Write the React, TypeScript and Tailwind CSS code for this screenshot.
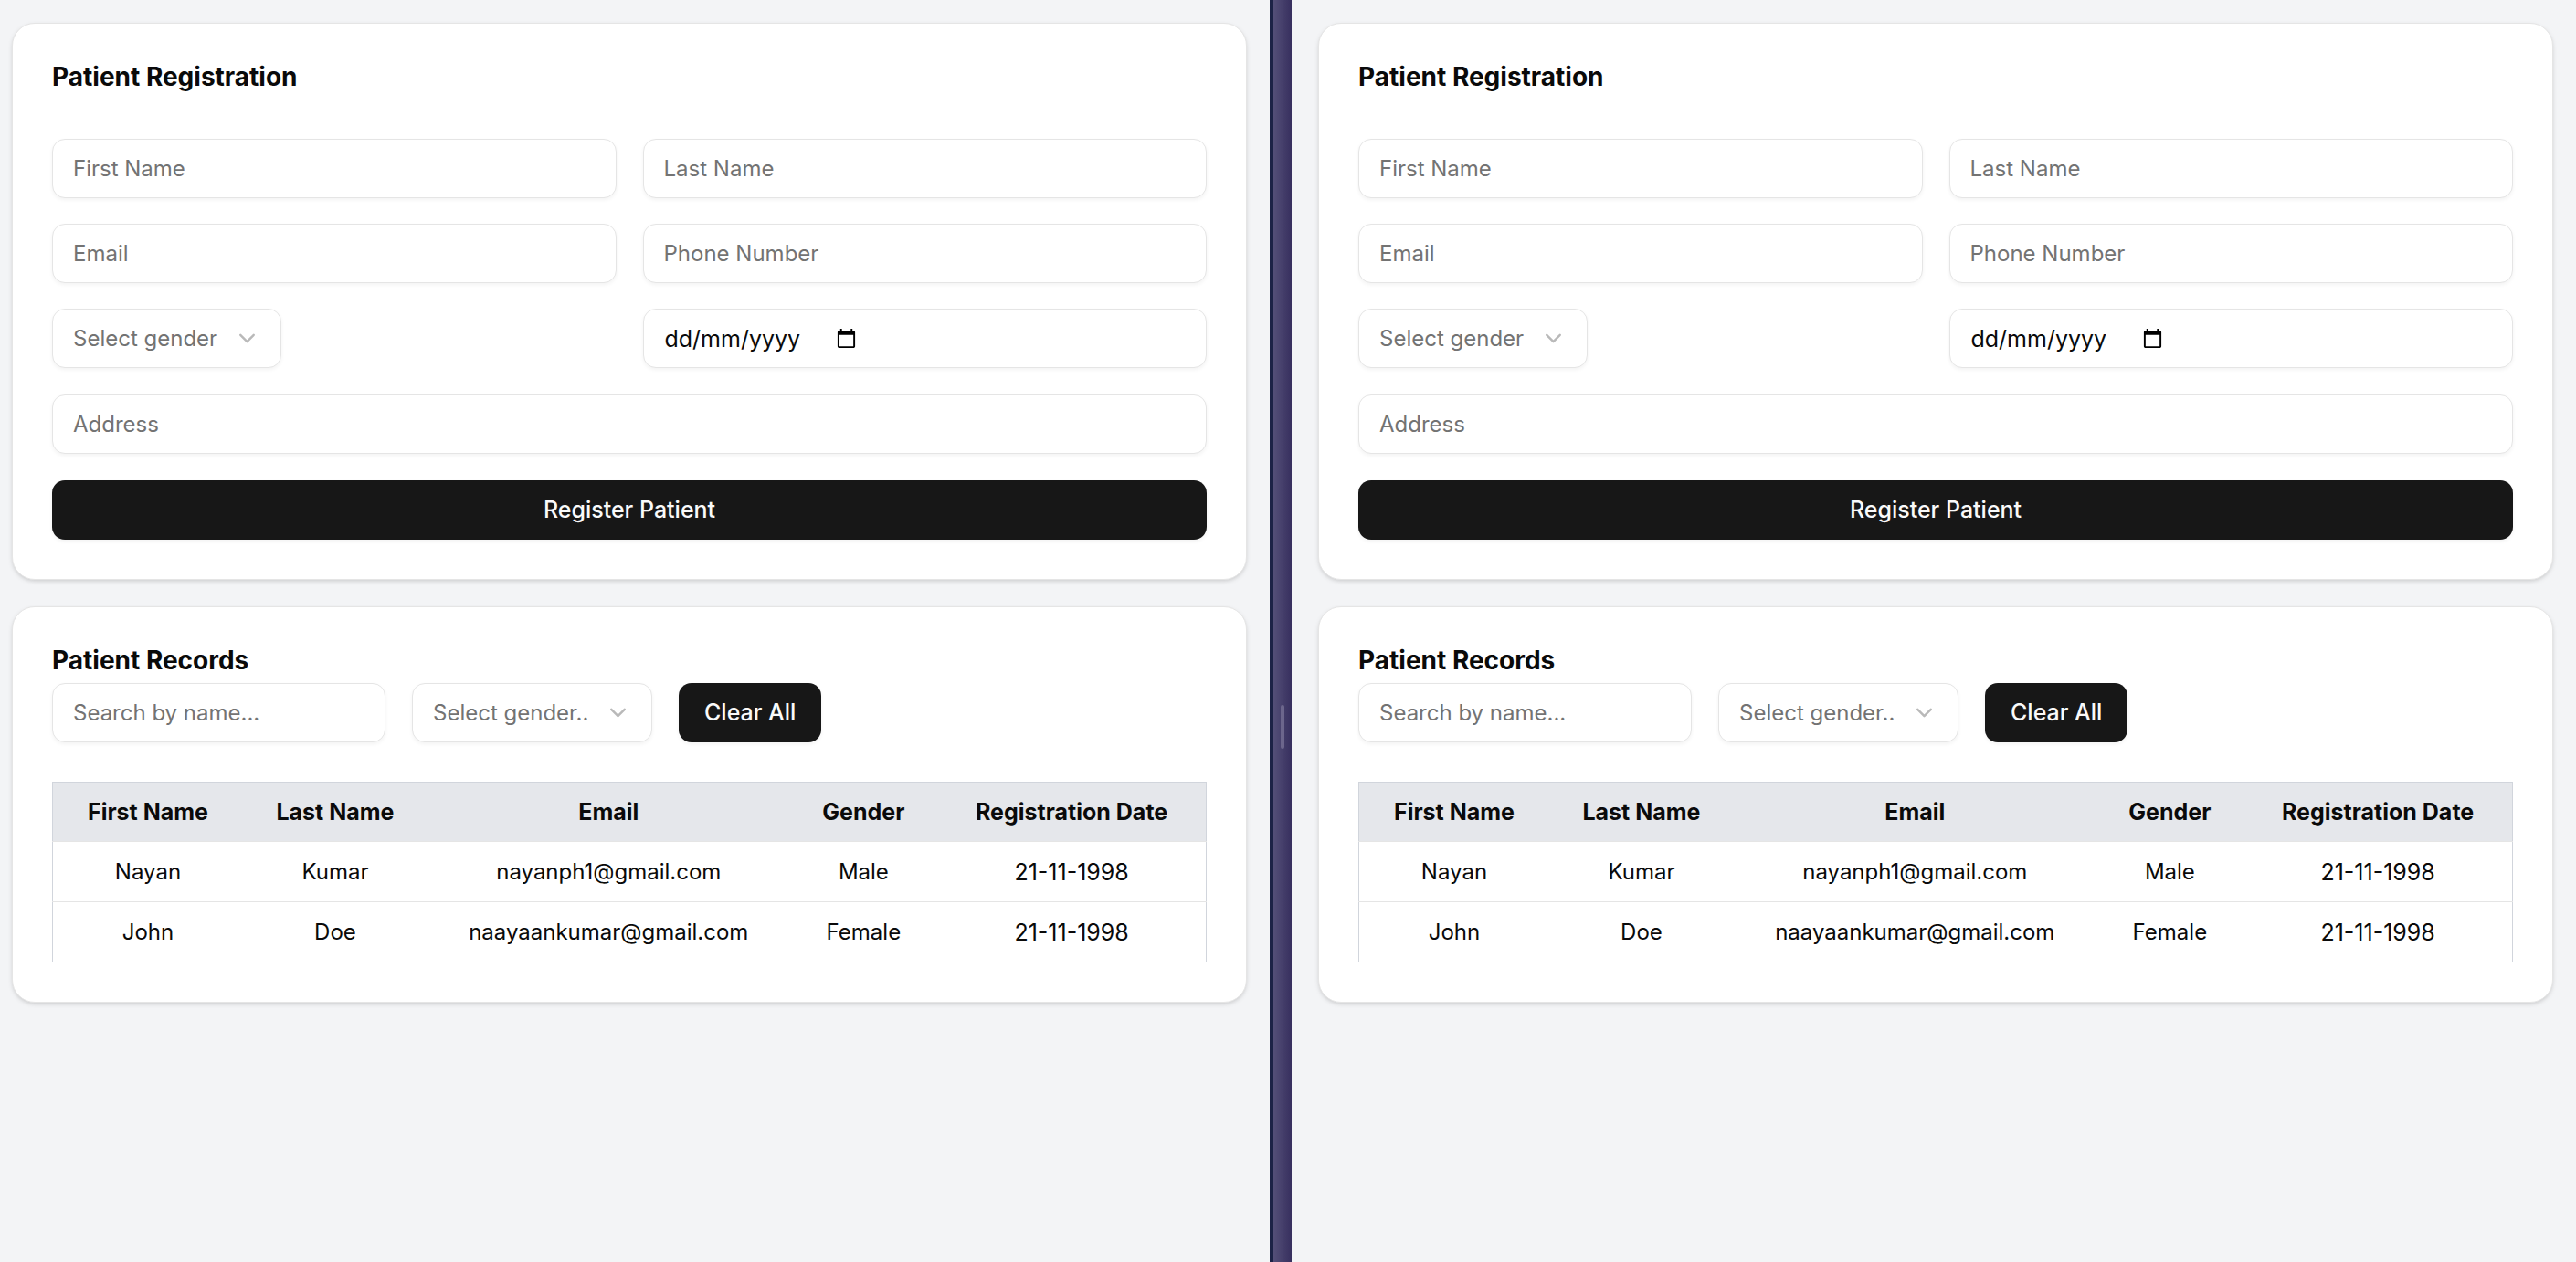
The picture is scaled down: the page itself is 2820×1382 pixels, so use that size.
import React from "react";

const FIELD =
  "h-[65px] min-w-0 rounded-[14px] border border-[#e5e5e5] bg-white px-[22px] text-[24px] text-[#0a0a0a] shadow-[0_2px_4px_rgba(0,0,0,0.05)] outline-none placeholder:text-[#737373] placeholder:opacity-100";

const BUTTON =
  "h-[65px] rounded-[14px] bg-[#171717] px-7 text-[25px] font-medium text-[#fafafa] shadow-[0_2px_4px_rgba(0,0,0,0.05)]";

const CARD =
  "flex flex-col rounded-[25px] border border-[#e5e5e5] bg-white p-[43px] shadow-[0_2px_5px_rgba(0,0,0,0.1),0_2px_4px_-2px_rgba(0,0,0,0.1)]";

const TITLE = "text-[28px] font-bold leading-[31px]";

const patients = [
  ["Nayan", "Kumar", "nayanph1@gmail.com", "Male", "21-11-1998"],
  ["John", "Doe", "naayaankumar@gmail.com", "Female", "21-11-1998"],
];

const columns = [
  { label: "First Name", width: "w-[16.5%]" },
  { label: "Last Name", width: "w-[16%]" },
  { label: "Email", width: "w-[31.4%]" },
  { label: "Gender", width: "w-[12.8%]" },
  { label: "Registration Date", width: "w-[23.3%]" },
];

function Field({ label, className = "", type = "text" }: { label: string; className?: string; type?: string }) {
  return <input type={type} aria-label={label} placeholder={label} className={`${FIELD} ${className}`} />;
}

function GenderSelect({ placeholder, className }: { placeholder: string; className: string }) {
  return (
    <div className={`relative ${className}`}>
      <select
        aria-label={placeholder}
        defaultValue=""
        className="h-[65px] w-full appearance-none rounded-[14px] border border-[#e5e5e5] bg-white pl-[22px] pr-[60px] text-[24px] text-[#737373] shadow-[0_2px_4px_rgba(0,0,0,0.05)] outline-none"
      >
        <option value="">{placeholder}</option>
        <option value="male">Male</option>
        <option value="female">Female</option>
      </select>
      <svg
        viewBox="0 0 24 24"
        className="pointer-events-none absolute right-[23px] top-[18px] size-[29px] text-[#b9b9b9]"
        fill="none"
        stroke="currentColor"
        strokeWidth="2"
        strokeLinecap="round"
        strokeLinejoin="round"
      >
        <path d="m6 9 6 6 6-6" />
      </svg>
    </div>
  );
}

function DateField() {
  return (
    <div className="relative">
      <input
        type="text"
        aria-label="Date of birth"
        placeholder="dd/mm/yyyy"
        className="h-[65px] w-full rounded-[14px] border border-[#e5e5e5] bg-white px-[23px] text-[25px] text-[#0a0a0a] shadow-[0_2px_4px_rgba(0,0,0,0.05)] outline-none placeholder:text-[#0a0a0a] placeholder:opacity-100"
      />
      <button type="button" aria-label="Open calendar" className="absolute left-[211px] top-[21px] size-[23px]">
        <svg viewBox="0 0 24 24" fill="currentColor" className="size-[23px] text-black">
          <path d="M20 3h-1V1h-2v2H7V1H5v2H4c-1.1 0-2 .9-2 2v16c0 1.1.9 2 2 2h16c1.1 0 2-.9 2-2V5c0-1.1-.9-2-2-2zm0 18H4V8h16v13z" />
        </svg>
      </button>
    </div>
  );
}

function Registration() {
  return (
    <section className={`${CARD} gap-[52px]`}>
      <h2 className={TITLE}>Patient Registration</h2>
      <form className="flex flex-col gap-[29px]" onSubmit={(e) => e.preventDefault()}>
        <div className="grid grid-cols-2 gap-x-[29px] gap-y-7">
          <Field label="First Name" />
          <Field label="Last Name" />
          <Field label="Email" type="email" />
          <Field label="Phone Number" type="tel" />
          <GenderSelect placeholder="Select gender" className="w-[251px]" />
          <DateField />
        </div>
        <Field label="Address" />
        <button type="submit" className={BUTTON}>
          Register Patient
        </button>
      </form>
    </section>
  );
}

function Records() {
  return (
    <section className={`${CARD} gap-[43px]`}>
      <div className="flex flex-col gap-[9px]">
        <h2 className={TITLE}>Patient Records</h2>
        <div className="flex gap-[29px]">
          <Field label="Search by name..." className="w-[365px]" />
          <GenderSelect placeholder="Select gender.." className="w-[263px]" />
          <button type="button" className={BUTTON}>
            Clear All
          </button>
        </div>
      </div>
      <table className="w-full table-fixed border-collapse border border-[#d1d5dc] text-center text-[24px] leading-9">
        <thead>
          <tr className="h-[65px] border-b border-[#e5e5e5] bg-[#e5e7eb]">
            {columns.map((c) => (
              <th key={c.label} scope="col" className={`${c.width} text-[25px] font-bold`}>
                {c.label}
              </th>
            ))}
          </tr>
        </thead>
        <tbody>
          {patients.map((row) => (
            <tr key={row[2]} className="h-[66px] border-b border-[#e5e5e5] last:border-[#d1d5dc]">
              {row.map((cell, i) => (
                <td key={i} className="last:text-[25px]">
                  {cell}
                </td>
              ))}
            </tr>
          ))}
        </tbody>
      </table>
    </section>
  );
}

function Pane({ className }: { className: string }) {
  return (
    <main className={`flex min-w-0 flex-1 flex-col gap-[29px] bg-[#f3f4f6] pr-[25px] pt-[25px] ${className}`}>
      <Registration />
      <Records />
    </main>
  );
}

export default function App() {
  return (
    <div className="flex min-h-screen font-['Inter',sans-serif] text-[#0a0a0a]">
      <Pane className="pl-[13px]" />
      <div
        role="separator"
        aria-orientation="vertical"
        className="flex w-6 shrink-0 justify-center border-l-4 border-[#1c2246] bg-linear-to-r from-[#544f78] to-[#372f5e] pt-[772px]"
      >
        <div className="h-12 w-1 rounded-full bg-[#6c668c]" />
      </div>
      <Pane className="pl-[29px]" />
    </div>
  );
}
